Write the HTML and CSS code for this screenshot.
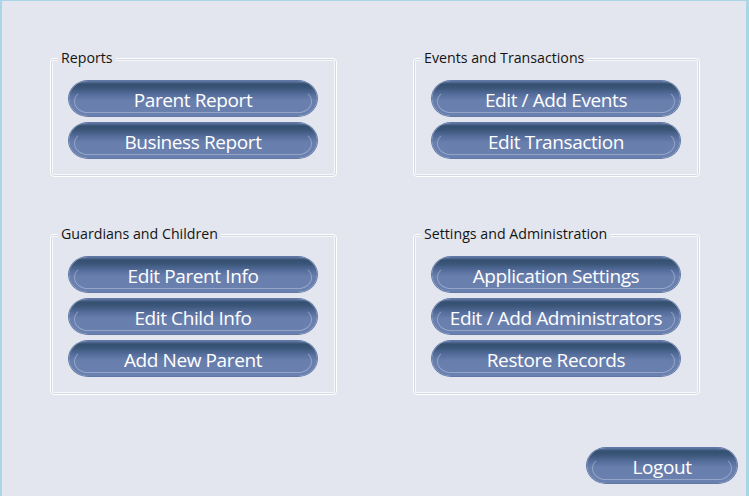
FILE: index.html
```html
<!DOCTYPE html>
<html>
<head>
<meta charset="utf-8">
<link rel="stylesheet" href="styles.css">
</head>
<body>
<div class="window">
  <div class="groups">
    <div class="group">
      <span class="legend">Reports</span>
      <button class="pill">Parent Report</button>
      <button class="pill">Business Report</button>
    </div>
    <div class="group">
      <span class="legend">Events and Transactions</span>
      <button class="pill">Edit / Add Events</button>
      <button class="pill">Edit Transaction</button>
    </div>
    <div class="group">
      <span class="legend">Guardians and Children</span>
      <button class="pill">Edit Parent Info</button>
      <button class="pill">Edit Child Info</button>
      <button class="pill">Add New Parent</button>
    </div>
    <div class="group">
      <span class="legend">Settings and Administration</span>
      <button class="pill">Application Settings</button>
      <button class="pill">Edit / Add Administrators</button>
      <button class="pill">Restore Records</button>
    </div>
  </div>
  <div class="footer">
    <button class="pill logout">Logout</button>
  </div>
</div>
</body>
</html>
```
FILE: styles.css
```css
* { box-sizing: border-box; }
html, body { margin: 0; padding: 0; }
body {
  width: 749px;
  height: 496px;
  overflow: hidden;
  background: #e3e6ee;
  font-family: "Open Sans", "Noto Sans", sans-serif;
}
.window {
  width: 749px;
  height: 496px;
  border-top: 1px solid #a9d6e6;
  border-left: 2px solid #a9d6e6;
  border-right: 3px solid #a9d6e6;
  padding: 57px 9px 0 48px;
  display: flex;
  flex-direction: column;
}
.groups {
  display: grid;
  grid-template-columns: 287px 287px;
  column-gap: 76px;
  row-gap: 57px;
  align-items: start;
}
.group {
  position: relative;
  border: 1px solid #ffffff;
  border-radius: 4px;
  box-shadow: inset 0 0 0 1px #d6d9e2, inset 0 0 0 2px #f7f8fb;
  padding: 22px 19px 18px 18px;
  display: flex;
  flex-direction: column;
  gap: 7px;
}
.legend {
  position: absolute;
  top: -10px;
  left: 7px;
  padding: 0 3px;
  background: #e3e6ee;
  font-size: 14.2px;
  line-height: 18px;
  color: #141414;
}
.pill {
  position: relative;
  width: 248px;
  height: 35px;
  border: none;
  border-radius: 19px / 50%;
  background: linear-gradient(to bottom, #6278a7 0%, #34506f 9%, #3b5679 20%, #556d9b 38%, #687ead 55%, #6a80ae 100%);
  box-shadow: 0 0 0 1px #6279a8;
  color: #ffffff;
  font-family: "Open Sans", "Noto Sans", sans-serif;
  font-size: 19px;
  letter-spacing: -0.4px;
  line-height: 35px;
  padding: 2px 0 0 0;
  text-align: center;
  white-space: nowrap;
}
.pill::after {
  content: "";
  position: absolute;
  left: 5px;
  right: 5px;
  top: 9px;
  bottom: 3px;
  border-radius: 14px / 50%;
  border: 1px solid rgba(210, 220, 240, 0.4);
  border-top-color: transparent;
}
.footer {
  display: flex;
  justify-content: flex-end;
  margin-top: 53px;
}
.logout {
  width: 150px;
}
```
